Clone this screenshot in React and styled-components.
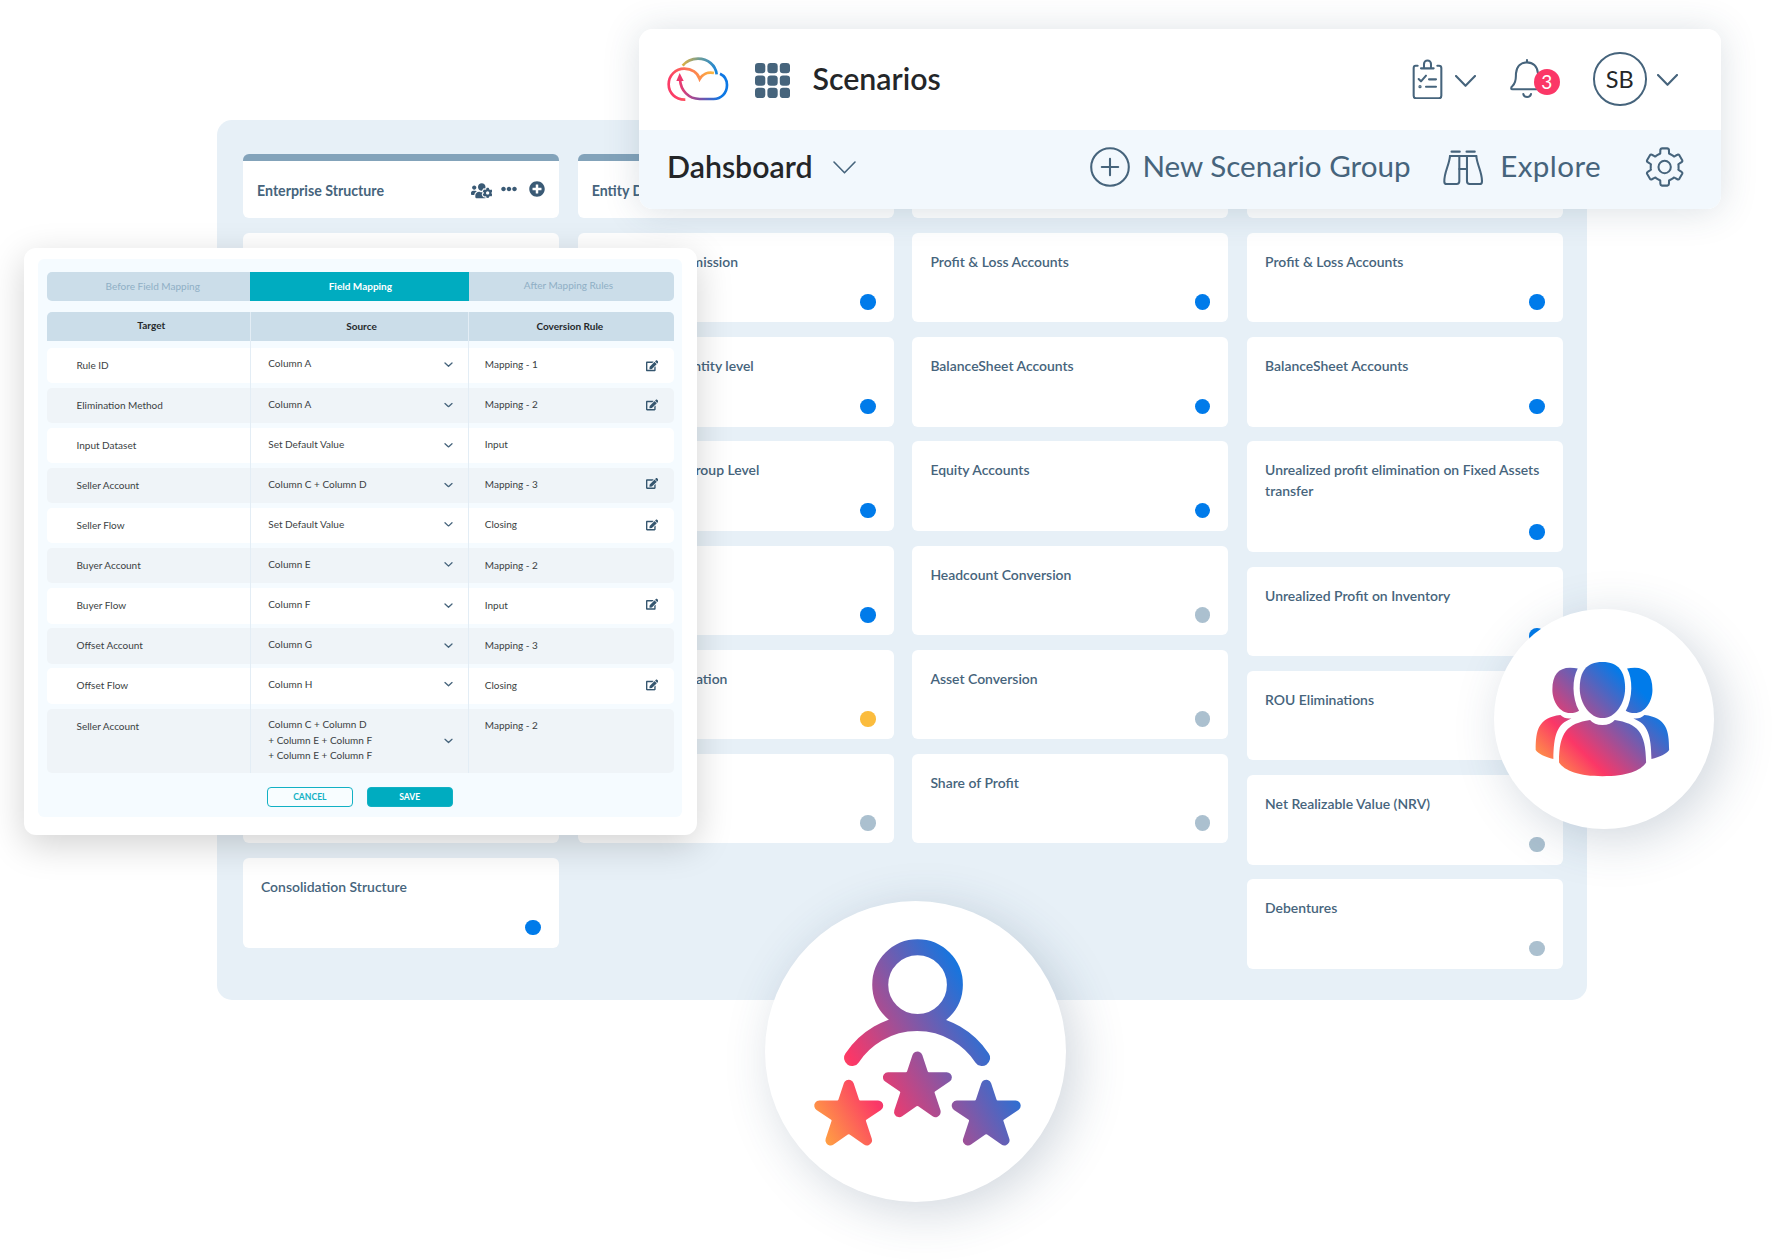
import React from "react";
import styled, { createGlobalStyle } from "styled-components";
import { FaEdit, FaUsersCog, FaEllipsisH, FaPlusCircle } from "react-icons/fa";

const ink = "#46647c";
const dotColors = { blue: "#007bea", grey: "#abc0cf", amber: "#fbbc3d" };

const GlobalStyle = createGlobalStyle`
  *, *::before, *::after { box-sizing: border-box; }
  body {
    margin: 0;
    background: #fff;
    font-family: Lato, "Open Sans", sans-serif;
  }
`;

const Stage = styled.main`
  position: relative;
  width: 1778px;
  height: 1260px;
  overflow: hidden;
  background: #fff;
`;

/* ---------- Board ---------- */

const Board = styled.section`
  position: absolute;
  left: 217px;
  top: 120px;
  width: 1369.5px;
  height: 880px;
  padding: 34px 23px 0 26px;
  display: grid;
  grid-template-columns: repeat(4, 316px);
  column-gap: 18.7px;
  align-items: start;
  background: #e7f0f7;
  border-radius: 15px;
`;

const Column = styled.div`
  display: flex;
  flex-direction: column;
  gap: 14.7px;
`;

const ColumnHeader = styled.header`
  display: flex;
  align-items: center;
  height: 64.3px;
  padding: 1px 14px 0;
  border-top: 7px solid #83a3ba;
  border-radius: 6px;
  background: #fff;
`;

const ColumnTitle = styled.h3`
  flex: 1;
  margin: 0;
  font-size: 14.2px;
  font-weight: 700;
  color: ${ink};
  white-space: nowrap;
`;

const ColumnTools = styled.div`
  display: flex;
  align-items: center;
  color: #3a5a75;
`;

const Tool = styled.span`
  display: flex;
  margin-left: ${(p) => p.$gap || 0}px;
  margin-top: ${(p) => p.$drop || 0}px;
`;

const Card = styled.article`
  display: flex;
  flex-direction: column;
  justify-content: space-between;
  min-height: ${(p) => (p.$tall ? 110.7 : 89.5)}px;
  padding: 18px 18px 12.5px;
  border-radius: 6px;
  background: #fff;
`;

const CardTitle = styled.p`
  margin: 0;
  min-height: 21px;
  font-size: 13.95px;
  line-height: 21px;
  font-weight: 600;
  color: ${ink};
`;

const Dot = styled.span`
  align-self: flex-end;
  width: 15.6px;
  height: 15.6px;
  border-radius: 50%;
  background: ${(p) => dotColors[p.$tone]};
`;

/* ---------- Field mapping window ---------- */

const Modal = styled.section`
  position: absolute;
  left: 24px;
  top: 248px;
  width: 673.3px;
  height: 587px;
  padding: 10.7px 15.6px 17.7px 14.3px;
  border-radius: 12px;
  background: #fff;
  box-shadow: 0 10px 36px rgba(0, 0, 0, 0.18);
`;

const ModalBody = styled.div`
  height: 100%;
  padding: 13.3px 8px 0 8.7px;
  border-radius: 6px;
  background: #f5fbff;
  color: #3b3f43;
  font-size: 10px;
  white-space: nowrap;
`;

const Tabs = styled.div`
  display: grid;
  grid-template-columns: 203.5px 218.8px 1fr;
  height: 29.3px;
  border-radius: 5px;
  overflow: hidden;
  background: #cbdde9;
`;

const Tab = styled.div`
  display: flex;
  align-items: center;
  justify-content: center;
  padding: 0 ${(p) => p.$insetRight || 0}px ${(p) => p.$lift || 0}px ${(p) => p.$inset || 0}px;
  background: ${(p) => (p.$active ? "#00acc0" : "transparent")};
  color: ${(p) => (p.$active ? "#fff" : "#8fafc5")};
  font-weight: ${(p) => (p.$active ? 700 : 400)};
`;

const Table = styled.div`
  position: relative;
  margin-top: 10.4px;
  display: flex;
  flex-direction: column;
  gap: 4.8px;

  &::after {
    content: "";
    position: absolute;
    top: 0;
    bottom: 0;
    left: 203px;
    width: 219px;
    border: solid #e3edf5;
    border-width: 0 1px;
  }
`;

const HeadRow = styled.div`
  display: grid;
  grid-template-columns: 203.5px 218px 1fr;
  height: 29.3px;
  margin-bottom: 1.9px;
  border-radius: 5px 5px 0 0;
  background: #cbdde9;
  color: #26292c;
  font-weight: 700;
`;

const HeadCell = styled.div`
  display: flex;
  align-items: center;
  justify-content: center;
  padding: 0 ${(p) => p.$insetRight || 0}px ${(p) => p.$lift || 0}px ${(p) => p.$inset || 0}px;
`;

const Row = styled.div`
  display: grid;
  grid-template-columns: 203.5px 218px 1fr;
  height: ${(p) => (p.$tall ? 64.7 : 35.3)}px;
  border-radius: 5px;
  background: ${(p) => (p.$shaded ? "#eff4f8" : "#fff")};
`;

const Cell = styled.div`
  display: flex;
  align-items: center;
  justify-content: space-between;
  padding-left: ${(p) => p.$inset}px;
  padding-right: 15.5px;
`;

const CellText = styled.span`
  align-self: flex-start;
  line-height: 15.2px;
  white-space: pre-line;
  margin-top: ${(p) => p.$top}px;
`;

const Nudge = styled.span`
  display: flex;
  color: #35566f;
  transform: translateY(${(p) => p.$y || 0}px);
`;

const Actions = styled.div`
  display: flex;
  gap: 14px;
  margin: 13.4px 0 0 220px;
`;

const Button = styled.button`
  width: 85.8px;
  height: 20.7px;
  padding: 0;
  border: 1px solid #12b1c4;
  border-radius: 4px;
  background: ${(p) => (p.$primary ? "#00acc0" : "#f8fdff")};
  color: ${(p) => (p.$primary ? "#fff" : "#12b1c4")};
  font: 700 8.6px Lato, sans-serif;
`;

/* ---------- Top bar ---------- */

const TopBar = styled.header`
  position: absolute;
  left: 639px;
  top: 29.3px;
  width: 1082px;
  height: 180px;
  border-radius: 14px;
  overflow: hidden;
  background: #fff;
`;

const TopBarShadow = styled.div`
  position: absolute;
  left: 639px;
  top: 29.3px;
  width: 1082px;
  height: 180px;
  border-radius: 14px;
  box-shadow: 0 2px 36px rgba(40, 70, 95, 0.17);
`;

const BrandRow = styled.div`
  display: flex;
  align-items: center;
  justify-content: space-between;
  height: 101px;
  padding: 0 43px 1.4px 27.6px;
`;

const ActionRow = styled.div`
  display: flex;
  align-items: center;
  justify-content: space-between;
  height: 79px;
  padding: 0 37px 5px 28px;
  background: #f2f8fd;
`;

const Group = styled.div`
  display: flex;
  align-items: center;
`;

const Item = styled.span`
  position: relative;
  display: flex;
  flex: none;
  margin-left: ${(p) => p.$gap || 0}px;
  margin-top: ${(p) => p.$drop || 0}px;
`;

const Heading = styled.h1`
  margin: -3px 0 0 ${(p) => p.$gap || 0}px;
  font-size: 30.3px;
  line-height: 36px;
  font-weight: 600;
  color: #242628;
`;

const Label = styled.span`
  width: ${(p) => p.$width}px;
  margin-left: ${(p) => p.$gap}px;
  margin-top: -3px;
  font-size: 29.6px;
  line-height: 36px;
  letter-spacing: ${(p) => p.$tracking || 0}px;
  color: ${ink};
  white-space: nowrap;
`;

const Badge = styled.span`
  position: absolute;
  left: 23.5px;
  top: 10px;
  width: 26px;
  height: 26px;
  border-radius: 50%;
  background: #fb3767;
  color: #fff;
  font-size: 19px;
  line-height: 25px;
  text-align: center;
`;

const Avatar = styled.span`
  display: grid;
  place-items: center;
  width: 53.4px;
  height: 53.4px;
  margin-left: 49.5px;
  border: 2px solid ${ink};
  border-radius: 50%;
  font-size: 23.5px;
  color: #242628;
`;

/* ---------- Round medallions ---------- */

const Medallion = styled.div`
  position: absolute;
  left: ${(p) => p.$x}px;
  top: ${(p) => p.$y}px;
  width: ${(p) => p.$size}px;
  height: ${(p) => p.$size}px;
  border-radius: 50%;
  background: #fff;
  box-shadow: 10px 10px 50px rgba(45, 75, 105, 0.22);

  svg {
    display: block;
    width: 100%;
    height: 100%;
  }
`;

/* ---------- Drawings ---------- */

const Stroke = ({ box, w, h, children, width = 6.2 }) => (
  <svg
    viewBox={box}
    width={w}
    height={h}
    fill="none"
    stroke={ink}
    strokeWidth={width}
    strokeLinecap="round"
    strokeLinejoin="round"
  >
    {children}
  </svg>
);

const Chevron = ({ w, h, thickness }) => (
  <Stroke box={`0 0 ${w} ${h}`} w={w} h={h} width={thickness}>
    <path d={`M1 1L${w / 2} ${h - 1.2}L${w - 1} 1`} />
  </Stroke>
);

const CloudLogo = () => (
  <svg viewBox="35 35 186 134" width="62" height="44.7" fill="none" strokeWidth="8" strokeLinecap="butt">
    <defs>
      <linearGradient id="cloudTop" gradientUnits="userSpaceOnUse" x1="80" y1="60" x2="185" y2="85">
        <stop offset="0" stopColor="#e0b040" />
        <stop offset="0.45" stopColor="#6a9c9a" />
        <stop offset="1" stopColor="#1583dc" />
      </linearGradient>
      <linearGradient id="cloudLeft" gradientUnits="userSpaceOnUse" x1="50" y1="120" x2="175" y2="80">
        <stop offset="0" stopColor="#fb3d67" />
        <stop offset="0.55" stopColor="#fd8150" />
        <stop offset="1" stopColor="#fbb83f" />
      </linearGradient>
      <linearGradient id="cloudBase" gradientUnits="userSpaceOnUse" x1="70" y1="110" x2="205" y2="120">
        <stop offset="0" stopColor="#f23a6c" />
        <stop offset="0.5" stopColor="#8050a4" />
        <stop offset="0.95" stopColor="#0d78e4" />
      </linearGradient>
    </defs>
    <path d="M82 61C94 46 110 40 128 40C158 40 181 60 184 87" stroke="url(#cloudTop)" />
    <path
      d="M90 163C60 164 40 142 40 117C40 90 61 70 87 70C109 70 127 82 133 101C141 87 157 79 176 83"
      stroke="url(#cloudLeft)"
      strokeLinejoin="miter"
    />
    <path
      d="M194 85C207 91 215 104 215 119C215 144 197 161 175 161H133C100 161 76 136 74 102"
      stroke="url(#cloudBase)"
    />
    <path d="M73 83L85 107H63Z" fill="#ee3a6e" />
  </svg>
);

const AppGrid = () => (
  <svg width="35.4" height="35.4" viewBox="0 0 35.4 35.4" fill={ink}>
    {[0, 1, 2].map((r) =>
      [0, 1, 2].map((c) => (
        <rect key={`${r}${c}`} x={c * 12.4} y={r * 12.4} width="10.3" height="10.3" rx="3.2" />
      ))
    )}
  </svg>
);

const Clipboard = () => (
  <Stroke box="37 38 93 122" w={31} h={40.7}>
    <path d="M54 58H48Q42 58 42 65V148Q42 156 50 156H117Q125 156 125 148V65Q125 58 118 58H113" />
    <path d="M64 66H102M73 64V53A10.5 10.5 0 0 1 94 53V64" />
    <path d="M57 98L64 105L79 88M88 99H109M79 121H109" />
    <circle cx="61" cy="121" r="1.8" />
  </Stroke>
);

const Bell = () => (
  <Stroke box="332 41 100 119" w={33.3} h={39.7}>
    <path d="M383 44V50" />
    <path d="M420 132H340C334 132 334 126 340 121C352 110 349 96 350 84C352 62 366 51 383 51C400 51 414 62 416 84" />
    <path d="M372 146Q374 155 383.5 155Q393 155 395 146" />
  </Stroke>
);

const PlusCircle = () => (
  <Stroke box="0 0 40 40" w={40} h={40} width={2.1}>
    <circle cx="20" cy="20" r="18.8" />
    <path d="M11.8 20H28.2M20 11.8V28.2" />
  </Stroke>
);

const Binoculars = () => (
  <Stroke box="129 313 121 106" w={40.3} h={35.3}>
    <path d="M155 318H179M200 318H224" strokeWidth="7" />
    <path d="M150 331H229" />
    <path d="M150 331C148 358 132 380 133 408Q133 415 140 415H170Q178 415 178 407V331" />
    <path d="M229 331C231 358 247 380 246 408Q246 415 239 415H209Q201 415 201 407V331" />
    <path d="M178 370H201" />
  </Stroke>
);

const polar = (r, deg) => {
  const a = ((deg - 90) * Math.PI) / 180;
  return `${(60 + r * Math.cos(a)).toFixed(1)} ${(60 + r * Math.sin(a)).toFixed(1)}`;
};

const gearPath =
  [0, 60, 120, 180, 240, 300]
    .map(
      (t, i) =>
        `${i ? "L" : "M"}${polar(42, t - 22)}Q${polar(41, t - 18)} ${polar(45, t - 17)}` +
        `L${polar(53, t - 14)}Q${polar(57, t - 13)} ${polar(56.5, t - 8)}L${polar(56.5, t + 8)}` +
        `Q${polar(57, t + 13)} ${polar(53, t + 14)}L${polar(45, t + 17)}Q${polar(41, t + 18)} ${polar(42, t + 22)}` +
        `Q${polar(42, t + 30)} ${polar(42, t + 38)}`
    )
    .join("") + "Z";

const Gear = () => (
  <Stroke box="1 0 118 120" w={39.3} h={40}>
    <path d={gearPath} />
    <circle cx="60" cy="60" r="18.5" />
  </Stroke>
);

const PeopleSide = () => (
  <>
    <path d="M1073 325C1056 355 1055 412 1077 452C1070 457 1062 459 1050 459C1020 459 997 425 997 389C997 345 1015 323 1050 323Q1063 323 1073 325Z" />
    <path d="M1021 465C1030 474 1040 476 1054 475C1010 492 1001 525 1000 597C975 591 955 582 947 570C947 510 955 473 1021 465Z" />
  </>
);

const People = () => (
  <svg viewBox="822 147 658 658">
    <defs>
      <linearGradient id="people" gradientUnits="userSpaceOnUse" x1="990" y1="650" x2="1255" y2="385">
        <stop offset="0" stopColor="#ffa043" />
        <stop offset="0.325" stopColor="#fb3767" />
        <stop offset="1" stopColor="#007bea" />
      </linearGradient>
      <linearGradient id="peopleFlip" gradientUnits="userSpaceOnUse" x1="1304" y1="650" x2="1039" y2="385">
        <stop offset="0" stopColor="#ffa043" />
        <stop offset="0.325" stopColor="#fb3767" />
        <stop offset="1" stopColor="#007bea" />
      </linearGradient>
    </defs>
    <g fill="url(#people)">
      <path d="M1147 306C1196 306 1215 335 1215 385C1215 430 1185 474 1147 474C1110 474 1079 430 1079 385C1079 335 1098 306 1147 306Z" />
      <path d="M1110 480Q1122 495 1147 495Q1172 495 1184 480C1252 491 1277 515 1278 607C1262 632 1220 648 1147 648C1078 648 1033 632 1017 607C1017 515 1042 491 1110 480Z" />
      <PeopleSide />
    </g>
    <g fill="url(#peopleFlip)" transform="translate(2294 0) scale(-1 1)">
      <PeopleSide />
    </g>
  </svg>
);

const starPoints = [
  [0, -62], [20.5, 0], [88, 0], [32.5, 37.7], [54.5, 104],
  [0, 66], [-54.5, 104], [-32.5, 37.7], [-88, 0], [-20.5, 0],
];

const starPath = (cx, cy) => {
  const toward = ([x, y], [tx, ty], d) => {
    const l = Math.hypot(tx - x, ty - y);
    return `${(cx + x + ((tx - x) * d) / l).toFixed(1)} ${(cy + y + ((ty - y) * d) / l).toFixed(1)}`;
  };
  const n = starPoints.length;
  return (
    starPoints
      .map((p, i) => {
        if (i % 2 === 0) return `${i ? "L" : "M"}${cx + p[0]} ${cy + p[1]}`;
        const prev = starPoints[(i + n - 1) % n];
        const next = starPoints[(i + 1) % n];
        return `L${toward(p, prev, 14)}Q${cx + p[0]} ${cy + p[1]} ${toward(p, next, 14)}`;
      })
      .join("") + "Z"
  );
};

const RatedPerson = () => (
  <svg viewBox="74.5 62 903.5 904">
    <defs>
      <linearGradient id="rated" gradientUnits="userSpaceOnUse" x1="-148" y1="84.5" x2="417" y2="-239">
        <stop offset="0" stopColor="#ffa043" />
        <stop offset="0.295" stopColor="#fb3767" />
        <stop offset="1" stopColor="#007bea" />
      </linearGradient>
    </defs>
    <g fill="none" stroke="url(#rated)" strokeWidth="48" strokeLinecap="round">
      <circle cx="532" cy="313" r="112" />
      <path d="M335.5 533A233.6 233.6 0 0 1 725.5 533" />
    </g>
    <g fill="url(#rated)" stroke="url(#rated)" strokeWidth="31" strokeLinejoin="round">
      <path d={starPath(531.5, 591)} />
      <path d={starPath(325.5, 676)} />
      <path d={starPath(738, 676)} />
    </g>
  </svg>
);

/* ---------- Data ---------- */

const columns = [
  {
    title: "Enterprise Structure",
    tools: true,
    cards: [{}, {}, {}, {}, {}, {}, { title: "Consolidation Structure", tone: "blue" }],
  },
  {
    title: "Entity Data",
    cards: [
      { title: "Entity Data Submission", tone: "blue" },
      { title: "Adjustments - Entity level", tone: "blue" },
      { title: "Adjustments - Group Level", tone: "blue" },
      { title: "", tone: "blue" },
      { title: "Currency Revaluation", tone: "amber" },
      { title: "", tone: "grey" },
    ],
  },
  {
    title: "",
    cards: [
      { title: "Profit & Loss Accounts", tone: "blue" },
      { title: "BalanceSheet Accounts", tone: "blue" },
      { title: "Equity Accounts", tone: "blue" },
      { title: "Headcount Conversion", tone: "grey" },
      { title: "Asset Conversion", tone: "grey" },
      { title: "Share of Profit", tone: "grey" },
    ],
  },
  {
    title: "",
    cards: [
      { title: "Profit & Loss Accounts", tone: "blue" },
      { title: "BalanceSheet Accounts", tone: "blue" },
      { title: "Unrealized profit elimination on Fixed Assets transfer", tone: "blue", tall: true },
      { title: "Unrealized Profit on Inventory", tone: "blue" },
      { title: "ROU Eliminations", tone: "grey" },
      { title: "Net Realizable Value (NRV)", tone: "grey" },
      { title: "Debentures", tone: "grey" },
    ],
  },
];

const rows = [
  { target: "Rule ID", source: "Column A", rule: "Mapping - 1", edit: 0.5, chev: -1 },
  { target: "Elimination Method", source: "Column A", rule: "Mapping - 2", edit: -0.3, chev: -0.5 },
  { target: "Input Dataset", source: "Set Default Value", rule: "Input", chev: -0.3 },
  { target: "Seller Account", source: "Column C + Column D", rule: "Mapping - 3", edit: -1.8, chev: -0.5 },
  { target: "Seller Flow", source: "Set Default Value", rule: "Closing", edit: -0.3, chev: -1.2 },
  { target: "Buyer Account", source: "Column E", rule: "Mapping - 2", chev: -1.2 },
  { target: "Buyer Flow", source: "Column F", rule: "Input", edit: -2, chev: 0 },
  { target: "Offset Account", source: "Column G", rule: "Mapping - 3", chev: 0 },
  { target: "Offset Flow", source: "Column H", rule: "Closing", edit: -1.3, chev: -1.5 },
  {
    target: "Seller Account",
    source: "Column C + Column D\n+ Column E + Column F\n+ Column E + Column F",
    rule: "Mapping - 2",
    chev: 0.2,
    tall: true,
  },
];

export default function App() {
  return (
    <Stage>
      <GlobalStyle />

      <Board>
        {columns.map((col, i) => (
          <Column key={i}>
            <ColumnHeader>
              <ColumnTitle>{col.title}</ColumnTitle>
              {col.tools && (
                <ColumnTools>
                  <Tool $drop={1}><FaUsersCog size={21.5} /></Tool>
                  <Tool $gap={9.2} $drop={-2.5}><FaEllipsisH size={16} /></Tool>
                  <Tool $gap={11.7} $drop={-2}><FaPlusCircle size={16} /></Tool>
                </ColumnTools>
              )}
            </ColumnHeader>
            {col.cards.map((card, j) => (
              <Card key={j} $tall={card.tall}>
                <CardTitle>{card.title}</CardTitle>
                {card.tone && <Dot $tone={card.tone} />}
              </Card>
            ))}
          </Column>
        ))}
      </Board>

      <TopBarShadow />
      <Modal>
        <ModalBody>
          <Tabs>
            <Tab $inset={8} $lift={1}>Before Field Mapping</Tab>
            <Tab $active $inset={1} $lift={1}>Field Mapping</Tab>
            <Tab $insetRight={6} $lift={2.5}>After Mapping Rules</Tab>
          </Tabs>
          <Table>
            <HeadRow>
              <HeadCell $inset={5} $lift={3.5}>Target</HeadCell>
              <HeadCell $inset={4} $lift={1.5}>Source</HeadCell>
              <HeadCell $insetRight={2.5} $lift={1.5}>Coversion Rule</HeadCell>
            </HeadRow>
            {rows.map((row, i) => (
              <Row key={i} $shaded={i % 2 === 1} $tall={row.tall}>
                <Cell $inset={29.5}>
                  <CellText $top={10}>{row.target}</CellText>
                </Cell>
                <Cell $inset={17.8}>
                  <CellText $top={8.8}>{row.source}</CellText>
                  <Nudge $y={row.chev}>
                    <Chevron w={9} h={5.5} thickness={1.3} />
                  </Nudge>
                </Cell>
                <Cell $inset={16.3}>
                  <CellText $top={9.4}>{row.rule}</CellText>
                  {row.edit !== undefined && (
                    <Nudge $y={row.edit}>
                      <FaEdit size={12.4} />
                    </Nudge>
                  )}
                </Cell>
              </Row>
            ))}
          </Table>
          <Actions>
            <Button>CANCEL</Button>
            <Button $primary>SAVE</Button>
          </Actions>
        </ModalBody>
      </Modal>

      <TopBar>
        <BrandRow>
          <Group>
            <Item $drop={1}><CloudLogo /></Item>
            <Item $gap={26.5} $drop={3}><AppGrid /></Item>
            <Heading $gap={22}>Scenarios</Heading>
          </Group>
          <Group>
            <Item $drop={-0.5}><Clipboard /></Item>
            <Item $gap={12.3} $drop={3}><Chevron w={21} h={12} thickness={2.1} /></Item>
            <Item $gap={34} $drop={-0.5}>
              <Bell />
              <Badge>3</Badge>
            </Item>
            <Avatar>SB</Avatar>
            <Item $gap={10.5} $drop={1.5}><Chevron w={21} h={12} thickness={2.1} /></Item>
          </Group>
        </BrandRow>
        <ActionRow>
          <Group>
            <Heading>Dahsboard</Heading>
            <Item $gap={20}><Chevron w={23} h={13} thickness={1.6} /></Item>
          </Group>
          <Group>
            <Item><PlusCircle /></Item>
            <Label $gap={12} $width={267}>New Scenario Group</Label>
            <Item $gap={33.5}><Binoculars /></Item>
            <Label $gap={17} $width={101} $tracking={0.4}>Explore</Label>
            <Item $gap={43.5}><Gear /></Item>
          </Group>
        </ActionRow>
      </TopBar>

      <Medallion $x={764.7} $y={900.7} $size={301.3}>
        <RatedPerson />
      </Medallion>
      <Medallion $x={1494} $y={609} $size={219.5}>
        <People />
      </Medallion>
    </Stage>
  );
}
